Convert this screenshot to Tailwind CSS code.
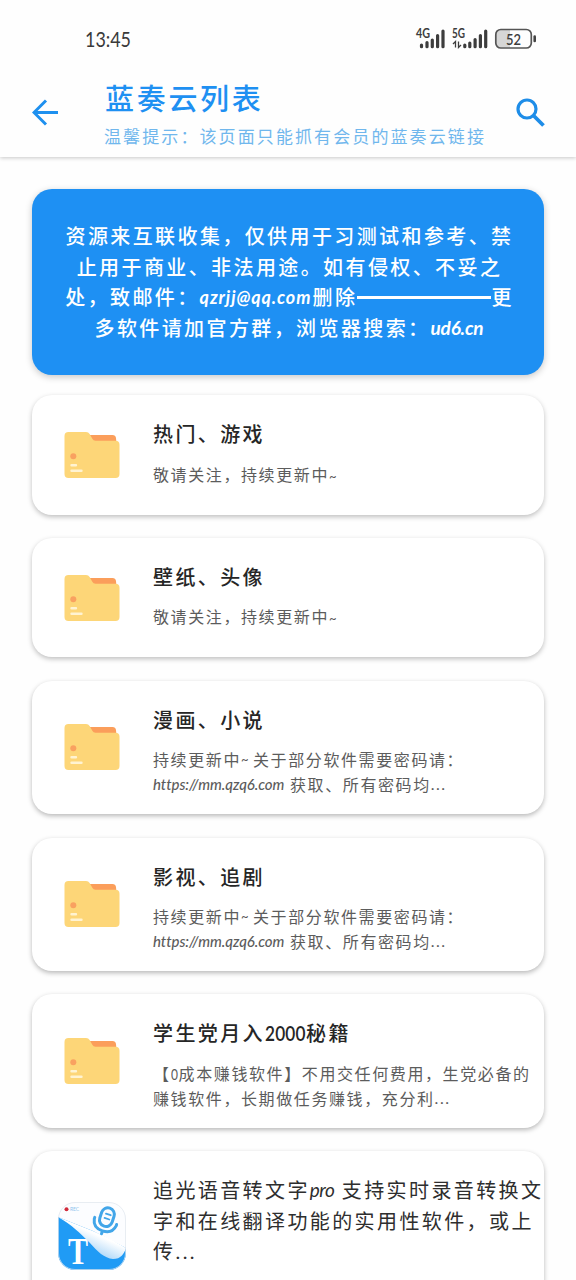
<!DOCTYPE html>
<html lang="zh-CN">
<head>
<meta charset="utf-8">
<title>蓝奏云列表</title>
<script src="https://cdn.jsdelivr.net/npm/@tailwindcss/browser@4"></script>
</head>
<body class="w-[576px] h-[1280px] overflow-hidden bg-[#fefefe] font-['Noto_Sans_CJK_SC',sans-serif] text-[#262626] [text-spacing-trim:space-all]">
<svg class="hidden" aria-hidden="true">
  <symbol id="folder" viewBox="0 0 68 68">
    <path d="M28 14h26.500q3 0 3.500 3l.5 6H33z" fill="#fb9e5b"/>
    <path d="M10.500 11h17.500q2.500 0 3.800 2.200l2.500 4.600q1 1.900 3.200 1.900h20q4 0 4 4v29.300q0 4-4 4h-47q-4 0-4-4v-38q0-4 4-4z" fill="#fdd678"/>
    <circle cx="15.300" cy="35.200" r="3" fill="#f9a160"/>
    <path d="M13.500 44.200h4.500M13.500 49.800h10" stroke="#fff3d2" stroke-width="2.400" stroke-linecap="round"/>
  </symbol>
</svg>
<div class="flex flex-col h-full">
  <header class="shrink-0 h-[157px] bg-[#fefefe] shadow-[0_1px_4px_rgba(0,0,0,0.22)]">
    <div class="flex h-[78px] items-center pl-[84px] pr-[39px] justify-between">
      <svg class="w-[50px] h-8" viewBox="0 0 50 32" fill="#3a3a3a"><text x="1" y="24" font-family="Lato" font-size="22" textLength="46" lengthAdjust="spacingAndGlyphs">13:45</text></svg>
      <svg class="w-[122px] h-8" viewBox="0 -4 122 32" fill="#3d3d3d">
        <text x="1" y="11" font-family="Lato" font-weight="700" font-size="13" textLength="14" lengthAdjust="spacingAndGlyphs">4G</text>
        <text x="37" y="11" font-family="Lato" font-weight="700" font-size="13" textLength="13" lengthAdjust="spacingAndGlyphs">5G</text>
        <g stroke="#3d3d3d" stroke-width="3.200" stroke-linecap="round">
          <path d="M6.500 18v1.700M12 15.500v4.200M17.300 13v6.700M22.600 8.500v11.200M28 4v15.700M49.800 18v1.700M54.800 16v3.700M60.100 12.500v7.200M65.400 8.500v11.200M70.700 4v15.700"/>
        </g>
        <path d="M40.500 20.500v-6l-2.500 2.500M43.500 14.500v6l2.500-2.500" fill="none" stroke="#3d3d3d" stroke-width="1.300"/>
        <path d="M86 2.500h9v18h-9q-5.500 0-5.500-5.500v-7q0-5.500 5.500-5.500z" fill="#d6d6d6"/>
        <rect x="80.800" y="2.500" width="35.500" height="18.500" rx="5" fill="none" stroke="#555" stroke-width="1.700"/>
        <path d="M119.700 9.500v4.500" stroke="#444" stroke-width="2.600" stroke-linecap="round"/>
        <text x="91" y="17.500" font-family="Lato" font-weight="600" font-size="16" textLength="15" lengthAdjust="spacingAndGlyphs">52</text>
      </svg>
    </div>
    <div class="flex h-[79px] pl-8 pr-[31px]">
      <svg class="w-[26px] h-[27px] mt-[21px]" viewBox="0 0 26 27" fill="none" stroke="#1e90ef" stroke-width="3"><path d="M26 13.500H2.500M14 1.500l-12 12 12 12"/></svg>
      <div class="ml-[47px] flex-1 flex flex-col whitespace-nowrap">
        <h1 class="text-[29px] tracking-[2.700px] leading-[38px] font-medium text-[#1e90f2]">蓝奏云列表</h1>
        <p class="-ml-px text-[17px] tracking-[2.100px] leading-[40px] text-[#70b7ed]">温馨提示：该页面只能抓有会员的蓝奏云链接</p>
      </div>
      <svg class="w-[29px] h-[29px] mt-5" viewBox="0 0 29 29" fill="none" stroke="#1e8de8" stroke-width="3.200"><circle cx="11" cy="11" r="9"/><path d="M17.500 17.500l10 10" stroke-width="3.800"/></svg>
    </div>
  </header>
  <main class="px-8 pt-8 flex flex-col">
    <section class="h-[186px] rounded-[20px] bg-[#1e90f3] shadow-[0_2px_7px_rgba(0,0,0,0.22)] pt-[32px] pl-[3px] text-white text-center text-[20px] tracking-[2.400px] leading-[30.600px] font-medium whitespace-nowrap">
      <p>资源来互联收集，仅供用于习测试和参考、禁</p>
      <p>止用于商业、非法用途。如有侵权、不妥之</p>
      <p class="flex justify-center"><span>处，致邮件：</span><span class="w-[113px] text-left font-['Lato'] font-bold italic text-[18px] tracking-[0.900px]">qzrjj@qq.com</span><span>删除</span><span class="w-[134px] h-[2.500px] bg-white self-center"></span><span>更</span></p>
      <p class="flex justify-center"><span>多软件请加官方群，浏览器搜索：</span><span class="w-[54px] text-left font-['Lato'] font-bold italic text-[19px] tracking-[-0.200px]">ud6.cn</span></p>
    </section>
    <div class="mt-5 flex flex-col gap-[23.400px]">
      <article class="h-[119.500px] rounded-[20px] bg-white shadow-[0_2px_5px_rgba(0,0,0,0.25)] flex pl-[26px]">
        <svg class="size-[68px] self-center"><use href="#folder"/></svg>
        <div class="ml-[27px] pt-[24px] whitespace-nowrap">
          <h2 class="text-[20px] tracking-[2.400px] leading-[30.500px] font-medium">热门、游戏</h2>
          <p class="mt-3 text-[16px] tracking-[1.600px] leading-[24.500px] text-[#5c5c5c]">敬请关注，持续更新中<span class="font-['Lato'] text-[13px]">~</span></p>
        </div>
      </article>
      <article class="h-[119.500px] rounded-[20px] bg-white shadow-[0_2px_5px_rgba(0,0,0,0.25)] flex pl-[26px]">
        <svg class="size-[68px] self-center"><use href="#folder"/></svg>
        <div class="ml-[27px] pt-[24px] whitespace-nowrap">
          <h2 class="text-[20px] tracking-[2.400px] leading-[30.500px] font-medium">壁纸、头像</h2>
          <p class="mt-3 text-[16px] tracking-[1.600px] leading-[24.500px] text-[#5c5c5c]">敬请关注，持续更新中<span class="font-['Lato'] text-[13px]">~</span></p>
        </div>
      </article>
      <article class="h-[133.400px] rounded-[20px] bg-white shadow-[0_2px_5px_rgba(0,0,0,0.28)] flex pl-[26px]">
        <svg class="size-[68px] self-center"><use href="#folder"/></svg>
        <div class="ml-[27px] pt-[24px] whitespace-nowrap">
          <h2 class="text-[20px] tracking-[2.400px] leading-[30.500px] font-medium">漫画、小说</h2>
          <div class="mt-3 text-[16px] tracking-[1.600px] leading-[24.500px] text-[#5c5c5c]">
            <p class="flex"><span>持续更新中</span><span class="w-[12px] font-['Lato'] text-[13px]">~</span><span>关于部分软件需要密码请：</span></p>
            <p class="flex"><span class="w-[137px] font-['Lato'] italic font-medium text-[15px] tracking-[-0.050px]">https://mm.qzq6.com</span><span>获取、所有密码均</span><span class="tracking-[1.500px] font-['Lato']">...</span></p>
          </div>
        </div>
      </article>
      <article class="h-[133.400px] rounded-[20px] bg-white shadow-[0_2px_5px_rgba(0,0,0,0.28)] flex pl-[26px]">
        <svg class="size-[68px] self-center"><use href="#folder"/></svg>
        <div class="ml-[27px] pt-[24px] whitespace-nowrap">
          <h2 class="text-[20px] tracking-[2.400px] leading-[30.500px] font-medium">影视、追剧</h2>
          <div class="mt-3 text-[16px] tracking-[1.600px] leading-[24.500px] text-[#5c5c5c]">
            <p class="flex"><span>持续更新中</span><span class="w-[12px] font-['Lato'] text-[13px]">~</span><span>关于部分软件需要密码请：</span></p>
            <p class="flex"><span class="w-[137px] font-['Lato'] italic font-medium text-[15px] tracking-[-0.050px]">https://mm.qzq6.com</span><span>获取、所有密码均</span><span class="tracking-[1.500px] font-['Lato']">...</span></p>
          </div>
        </div>
      </article>
      <article class="h-[133.400px] rounded-[20px] bg-white shadow-[0_2px_5px_rgba(0,0,0,0.28)] flex pl-[26px]">
        <svg class="size-[68px] self-center"><use href="#folder"/></svg>
        <div class="ml-[27px] pt-[24px] whitespace-nowrap">
          <h2 class="flex text-[20px] tracking-[2.400px] leading-[30.500px] font-medium"><span>学生党月入</span><span class="w-[41px]"><span class="inline-block origin-left scale-x-[0.820] font-['Lato'] text-[21px] font-semibold tracking-[0.200px]">2000</span></span><span>秘籍</span></h2>
          <div class="mt-3 text-[16px] tracking-[1.600px] leading-[24.500px] text-[#5c5c5c]">
            <p class="flex"><span>【</span><span class="w-[8px]"><span class="inline-block origin-left scale-x-[0.750] font-['Lato'] text-[16px] tracking-normal">0</span></span><span>成本赚钱软件】不用交任何费用，生党必备的</span></p>
            <p class="flex"><span>赚钱软件，长期做任务赚钱，充分利</span><span class="tracking-[1.500px] font-['Lato']">...</span></p>
          </div>
        </div>
      </article>
      <article class="h-[170px] rounded-[20px] bg-white shadow-[0_2px_5px_rgba(0,0,0,0.28)] flex pl-[26px]">
        <svg class="size-[68px] self-center" viewBox="0 0 68 68">
          <defs>
            <clipPath id="tile"><rect width="68" height="68" rx="17"/></clipPath>
            <linearGradient id="fold" gradientUnits="userSpaceOnUse" x1="46" y1="36" x2="38" y2="54"><stop offset="0" stop-color="#fff"/><stop offset="1" stop-color="#a9d5f8"/></linearGradient>
          </defs>
          <g clip-path="url(#tile)">
            <rect width="68" height="68" fill="#fcfdff"/>
            <path d="M0 15L35 29L68 46v22H0z" fill="#209bf5"/>
            <text x="10" y="61.500" font-family="Liberation Serif" font-weight="700" font-size="37" fill="#fff" textLength="20" lengthAdjust="spacingAndGlyphs">T</text>
            <path d="M0 15C14 23 22 31 31 40C40 50 46 56 55 57C63 57 66 52 68 46Q52 36 35 29z" fill="url(#fold)"/>
            <circle cx="8.500" cy="7.300" r="2" fill="#d12c3c"/>
            <text x="12" y="9.300" font-family="Lato" font-size="5" fill="#8fc5ee" textLength="9">REC</text>
            <g fill="none" stroke="#42a6e9" stroke-width="3" stroke-linecap="round" transform="rotate(18 48 18)">
              <rect x="41.500" y="5.500" width="13" height="19" rx="6.500"/>
              <path d="M36.500 19v1.500q1.500 9 11.500 9t11.500-9V19M48 29.500v3"/>
              <path d="M46 12h5M46 16.500h5" stroke-width="1.800"/>
            </g>
          </g>
          <rect x=".5" y=".5" width="67" height="67" rx="16.500" fill="none" stroke="#dfe6ec" stroke-opacity=".7"/>
        </svg>
        <div class="ml-[27px] pt-[24px] whitespace-nowrap text-[20px] tracking-[2.400px] leading-[30.500px] text-[#2e2e2e]">
          <p class="flex"><span>追光语音转文字</span><span class="w-[32px] font-['Lato'] italic text-[19px] tracking-[-0.500px]">pro</span><span>支持实时录音转换文</span></p>
          <p>字和在线翻译功能的实用性软件，或上</p>
          <p>传<span class="font-['Lato'] tracking-[2.500px]">...</span></p>
        </div>
      </article>
    </div>
  </main>
</div>
</body>
</html>
